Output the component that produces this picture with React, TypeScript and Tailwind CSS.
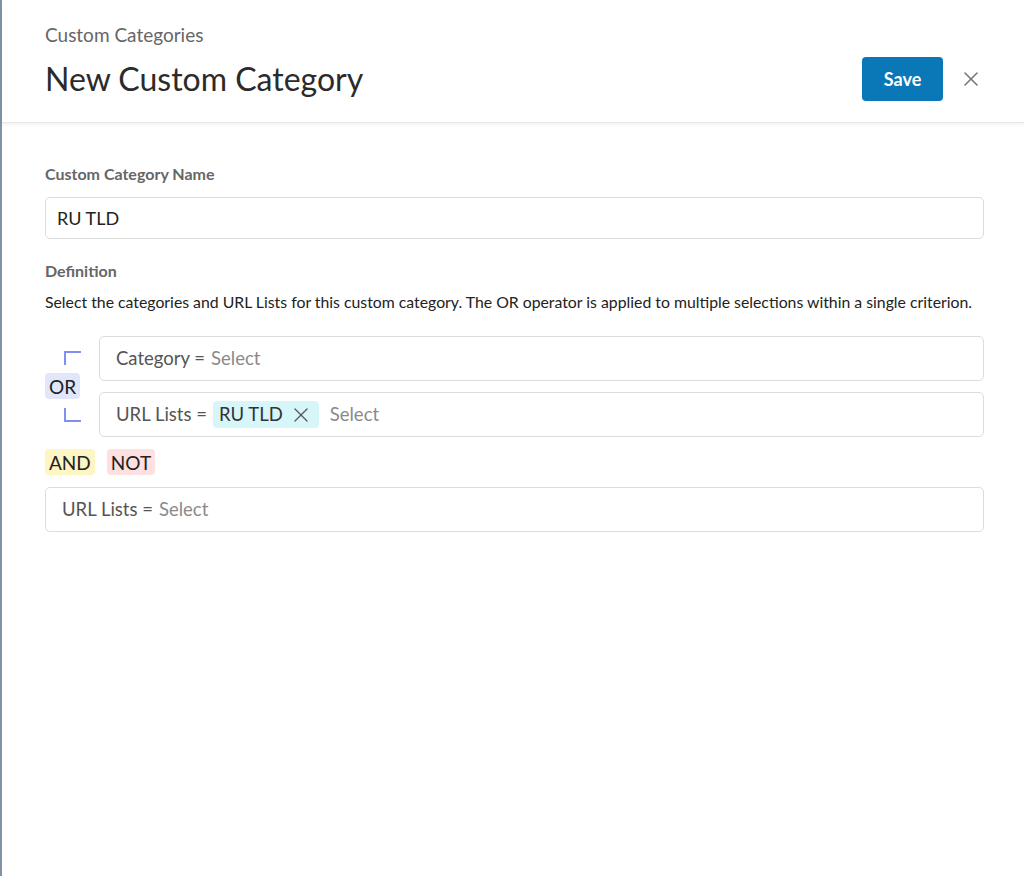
import { X } from 'lucide-react';

function Badge({ label, className }: { label: string; className: string }) {
  return (
    <span className={`inline-flex h-[26px] items-center rounded-[4px] px-[4px] text-[19px] leading-none text-[#222] ${className}`}>
      {label}
    </span>
  );
}

function CriterionBox({ field, children }: { field: string; children?: React.ReactNode }) {
  return (
    <div className="flex h-[45px] items-center gap-[6px] rounded-[5px] border border-[#dcdcdc] bg-white pl-[16px] text-[18.5px]">
      <span className="text-[#555]">{field} =</span>
      {children}
      <span className="text-[#8a8a8a]">Select</span>
    </div>
  );
}

export default function App() {
  return (
    <div className="flex min-h-[876px] w-[1024px] bg-white font-['Lato','Open_Sans',sans-serif] text-[#333]">
      <div className="w-[2px] shrink-0 bg-[#7e93a6]" />
      <div className="flex min-w-0 flex-1 flex-col">
        <header className="border-b border-[#e6e6e6] pb-[21px] pl-[43px] pr-[41px] pt-[23px] shadow-[0_2px_3px_rgba(0,0,0,0.05)]">
          <div className="text-[19px] leading-[24px] text-[#666]">Custom Categories</div>
          <div className="mt-[10px] flex h-[44px] items-center justify-between">
            <h1 className="text-[32px] leading-[40px] text-[#2b2b2b]">New Custom Category</h1>
            <div className="flex items-center gap-[16px]">
              <button type="button" className="h-[44px] w-[81px] rounded-[4px] bg-[#0a78b6] text-[18px] font-bold text-white">
                Save
              </button>
              <button type="button" className="text-[#777]" aria-label="Close">
                <X className="h-[24px] w-[24px]" strokeWidth={1.6} />
              </button>
            </div>
          </div>
        </header>

        <main className="pl-[43px] pr-[40px] pt-[41px]">
          <label className="block text-[16px] font-bold leading-[20px] text-[#666]">Custom Category Name</label>
          <div className="mt-[13px] flex h-[42px] items-center rounded-[5px] border border-[#dcdcdc] pl-[11px] text-[18px] text-[#222]">
            RU TLD
          </div>

          <div className="mt-[22px] text-[16px] font-bold leading-[20px] text-[#666]">Definition</div>
          <p className="mt-[11px] text-[15.8px] leading-[20px] text-[#222]">
            Select the categories and URL Lists for this custom category. The OR operator is applied to multiple selections within a single criterion.
          </p>

          <div className="mt-[24px] flex gap-[18px]">
            <div className="flex w-[36px] shrink-0 flex-col items-end justify-center">
              <div className="h-[14px] w-[17px] border-l-2 border-t-2 border-[#7f8ff2]" />
              <div className="my-[8px] self-start">
                <Badge label="OR" className="bg-[#e1e6fb]" />
              </div>
              <div className="h-[14px] w-[17px] border-b-2 border-l-2 border-[#7f8ff2]" />
            </div>
            <div className="flex flex-1 flex-col gap-[11px]">
              <CriterionBox field="Category" />
              <CriterionBox field="URL Lists">
                <span className="mr-[5px] flex h-[27px] items-center gap-[6px] rounded-[4px] bg-[#d7f6fa] pl-[6px] pr-[6px] text-[#333]">
                  RU TLD
                  <X className="h-[24px] w-[24px] text-[#555]" strokeWidth={1.3} />
                </span>
              </CriterionBox>
            </div>
          </div>

          <div className="mt-[12px] flex gap-[12px]">
            <Badge label="AND" className="bg-[#fdf5c2]" />
            <Badge label="NOT" className="bg-[#fde0df]" />
          </div>

          <div className="mt-[12px]">
            <CriterionBox field="URL Lists" />
          </div>
        </main>
      </div>
    </div>
  );
}
